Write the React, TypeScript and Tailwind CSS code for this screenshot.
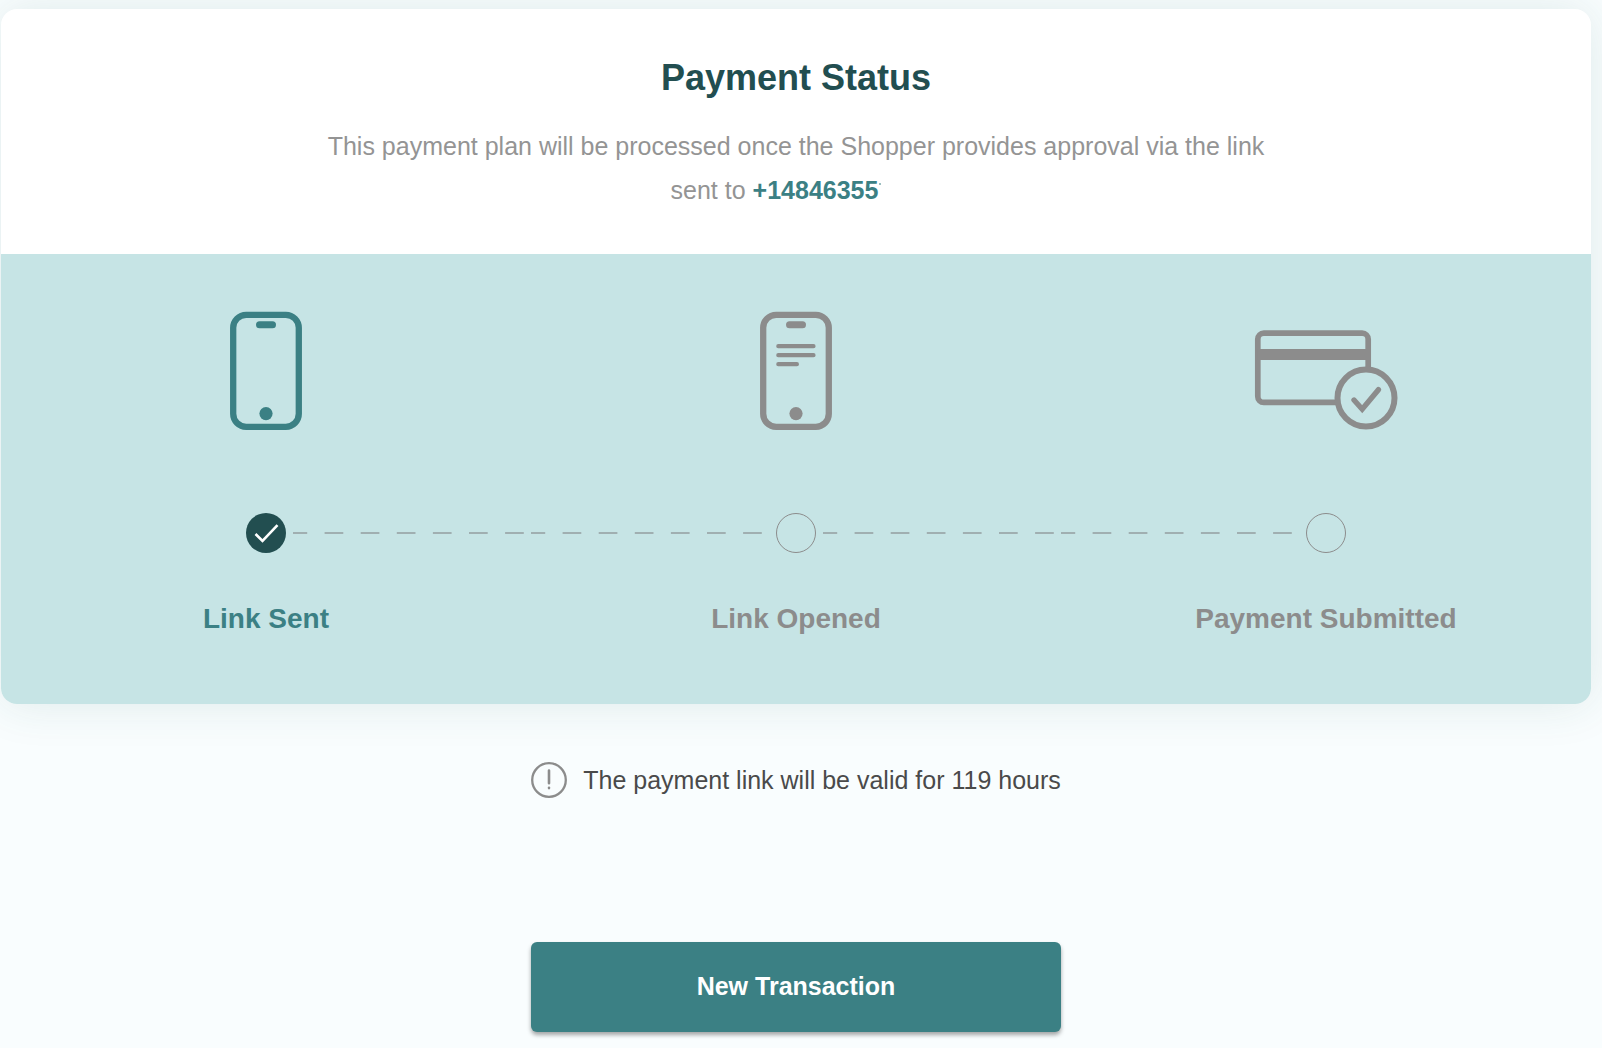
import type { ReactNode } from 'react';

function PhoneIcon({ lines = false }: { lines?: boolean }) {
  return (
    <svg viewBox="0 0 72 120" className="h-[120px] w-[72px]" fill="none" stroke="currentColor" aria-hidden="true">
      <rect x="3.2" y="3.8" width="65.6" height="112" rx="13" strokeWidth="6.3" />
      <rect x="26" y="10.2" width="20" height="7" rx="3.5" fill="currentColor" stroke="none" />
      <circle cx="36" cy="102.6" r="6.6" fill="currentColor" stroke="none" />
      {lines && <path d="M18.300 35.200h35.200M18.300 44.200h35.200M18.300 53.200h18.600" strokeWidth="4.200" strokeLinecap="round" />}
    </svg>
  );
}

function CardIcon() {
  return (
    <svg viewBox="0 0 144 120" className="h-[120px] w-[144px]" fill="none" stroke="currentColor" aria-hidden="true">
      <path d="M82 91.400H9.800a6 6 0 0 1-6-6V28.200a6 6 0 0 1 6-6H108.200a6 6 0 0 1 6 6V58" strokeWidth="5.700" />
      <path d="M3.800 43.500H114.200" strokeWidth="11" />
      <circle cx="112" cy="87" r="28.500" strokeWidth="6" />
      <path d="M100 89l8.200 9.200L124.400 78.700" strokeWidth="5.400" strokeLinecap="round" strokeLinejoin="miter" />
    </svg>
  );
}

function Connector({ visible }: { visible: boolean }) {
  return (
    <svg className="h-0.5 min-w-0 flex-1 text-[#a0afb1]" aria-hidden="true">
      {visible && (
        <line x1="0" y1="1" x2="100%" y2="1" stroke="currentColor" strokeWidth="2" strokeDasharray="18.700 17.400" strokeDashoffset="4.500" />
      )}
    </svg>
  );
}

type StepProps = { label: string; icon: ReactNode; done?: boolean; first?: boolean; last?: boolean };

function Step({ label, icon, done = false, first = false, last = false }: StepProps) {
  return (
    <li className={`flex min-w-0 flex-1 flex-col items-center ${done ? 'text-[#3b8084]' : 'text-[#8c8c8c]'}`}>
      {icon}
      <div className="mt-[82px] flex w-full items-center">
        <Connector visible={!first} />
        {done ? (
          <span className="mx-[7px] size-10 rounded-full bg-[#224e50]">
            <svg viewBox="0 0 40 40" className="size-10" fill="none" stroke="white" strokeWidth="2.600" aria-hidden="true">
              <path d="M9.500 21l7 7L31.500 12.200" />
            </svg>
          </span>
        ) : (
          <span className="mx-[7px] size-10 rounded-full border border-[#8c8c8c]" />
        )}
        <Connector visible={!last} />
      </div>
      <span className="mt-12 text-[28px] leading-9 font-bold">{label}</span>
    </li>
  );
}

export default function App() {
  return (
    <main className="min-h-screen bg-[#f9fdfe] pt-[9px] pr-[11px] pb-4 pl-px font-['Liberation_Sans',Arial,sans-serif]">
      <section className="rounded-2xl bg-white shadow-[0_0_48px_rgba(34,100,90,0.12)]">
        <header className="px-4 pt-[47px] pb-[42px] text-center">
          <h1 className="text-[36px] leading-[44px] font-bold text-[#224e50]">Payment Status</h1>
          <p className="mx-auto mt-6 max-w-[960px] text-[25px] leading-[44px] text-[#949494]">
            This payment plan will be processed once the Shopper provides approval via the link sent to{' '}
            <span className="pr-10 font-bold text-[#3b8084]">
              +14846355
              <span className="ml-px inline-block h-4 w-0.5 border-t-2 border-[#3b8084]/50" aria-hidden="true" />
            </span>
          </p>
        </header>
        <ol className="flex rounded-b-2xl bg-[#c6e4e5] pt-[57px] pb-[67px]">
          <Step label="Link Sent" icon={<PhoneIcon />} done first />
          <Step label="Link Opened" icon={<PhoneIcon lines />} />
          <Step label="Payment Submitted" icon={<CardIcon />} last />
        </ol>
      </section>

      <div className="mt-[58px] flex items-center justify-center gap-4">
        <svg viewBox="0 0 36 36" className="size-9 text-[#8c8c8c]" fill="none" stroke="currentColor" strokeWidth="2.300" aria-hidden="true">
          <circle cx="18" cy="18" r="16.800" />
          <path d="M18 8.500v12.700M18 25.700v.4" strokeWidth="2.600" strokeLinecap="round" />
        </svg>
        <p className="text-[25px] leading-9 text-[#4a4a4a]">The payment link will be valid for 119 hours</p>
      </div>

      <div className="mt-36 flex justify-center">
        <button
          type="button"
          className="h-[90px] w-1/3 rounded-md bg-[#3b8084] text-[25px] font-bold text-white shadow-[0_3px_4px_rgba(0,0,0,0.35)]"
        >
          New Transaction
        </button>
      </div>
    </main>
  );
}
